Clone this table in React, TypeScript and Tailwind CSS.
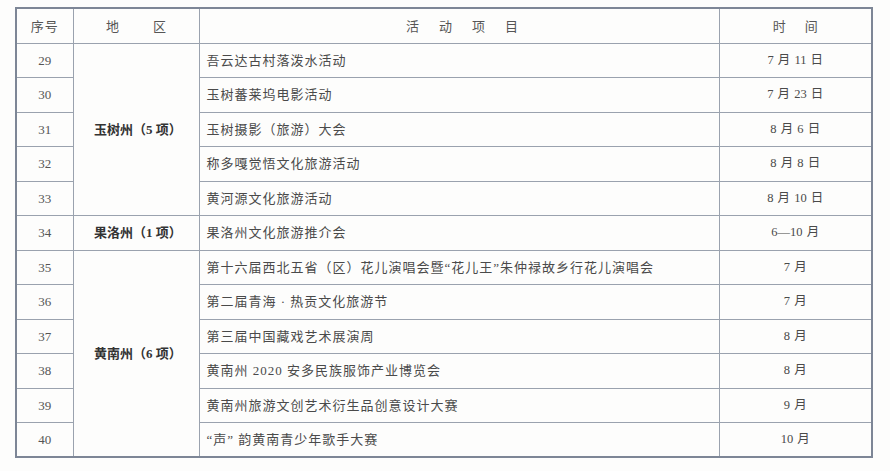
import React from "react";

type Row = { no: number; act: string; time: string };

const rows: Row[] = [
  { no: 29, act: "吾云达古村落泼水活动", time: "7 月 11 日" },
  { no: 30, act: "玉树蕃莱坞电影活动", time: "7 月 23 日" },
  { no: 31, act: "玉树摄影（旅游）大会", time: "8 月 6 日" },
  { no: 32, act: "称多嘎觉悟文化旅游活动", time: "8 月 8 日" },
  { no: 33, act: "黄河源文化旅游活动", time: "8 月 10 日" },
  { no: 34, act: "果洛州文化旅游推介会", time: "6—10 月" },
  { no: 35, act: "第十六届西北五省（区）花儿演唱会暨“花儿王”朱仲禄故乡行花儿演唱会", time: "7 月" },
  { no: 36, act: "第二届青海 · 热贡文化旅游节", time: "7 月" },
  { no: 37, act: "第三届中国藏戏艺术展演周", time: "8 月" },
  { no: 38, act: "黄南州 2020 安多民族服饰产业博览会", time: "8 月" },
  { no: 39, act: "黄南州旅游文创艺术衍生品创意设计大赛", time: "9 月" },
  { no: 40, act: "“声” 韵黄南青少年歌手大赛", time: "10 月" },
];

const regions: Record<number, { name: string; span: number }> = {
  29: { name: "玉树州（5 项）", span: 5 },
  34: { name: "果洛州（1 项）", span: 1 },
  35: { name: "黄南州（6 项）", span: 6 },
};

const serif = "font-['Liberation_Serif','Noto_Sans_CJK_SC',serif]";

export default function App() {
  return (
    <div className="w-[890px] h-[471px] bg-[#fdfdfc] pt-[7px] pl-[15px] overflow-hidden">
      <table className={`w-[856px] border-collapse border-2 border-[#7d8696] table-fixed text-[#4a4a4a] ${serif}`}>
        <colgroup>
          <col className="w-[57px]" />
          <col className="w-[126px]" />
          <col className="w-[520px]" />
          <col className="w-[153px]" />
        </colgroup>
        <thead>
          <tr className="h-[35px] font-['Noto_Sans_CJK_SC',sans-serif] text-[13px] text-[#555]">
            <th className="border border-[#9aa2ae] font-normal">
              <span className="tracking-[1px]">序号</span>
            </th>
            <th className="border border-[#9aa2ae] font-normal">
              <div className="flex justify-center gap-[34px]">
                <span>地</span>
                <span>区</span>
              </div>
            </th>
            <th className="border border-[#9aa2ae] font-normal">
              <div className="flex justify-center gap-[20px] pl-[6px]">
                <span>活</span>
                <span>动</span>
                <span>项</span>
                <span>目</span>
              </div>
            </th>
            <th className="border border-[#9aa2ae] font-normal">
              <div className="flex justify-center gap-[19px]">
                <span>时</span>
                <span>间</span>
              </div>
            </th>
          </tr>
        </thead>
        <tbody>
          {rows.map((r) => {
            const reg = regions[r.no];
            return (
              <tr key={r.no} className="h-[34.5px] text-[13px]">
                <td className="border border-[#9aa2ae] text-center text-[13px] text-[#555]">{r.no}</td>
                {reg && (
                  <td
                    rowSpan={reg.span}
                    className="border border-[#9aa2ae] text-center font-bold text-[13px] text-[#333] pl-[4px]"
                  >
                    {reg.name}
                  </td>
                )}
                <td className="border border-[#9aa2ae] pl-[7px] tracking-[1px] text-[#4a4a4a] whitespace-nowrap">
                  {r.act}
                </td>
                <td className="border border-[#9aa2ae] text-center text-[12.5px] text-[#4a4a4a] [word-spacing:1px]">
                  {r.time}
                </td>
              </tr>
            );
          })}
        </tbody>
      </table>
    </div>
  );
}
